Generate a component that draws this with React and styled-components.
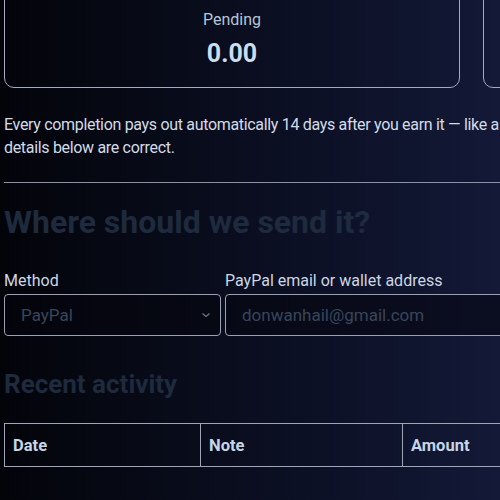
import React from 'react';
import styled, { createGlobalStyle } from 'styled-components';

const Global = createGlobalStyle`
  html, body {
    margin: 0;
    padding: 0;
    background: #05060e;
  }
  body {
    font-family: Roboto, "Noto Sans", "Liberation Sans", sans-serif;
    overflow: hidden;
  }
`;

const Page = styled.div`
  width: 500px;
  height: 500px;
  overflow: hidden;
  background: linear-gradient(90deg, #03040a 0%, #080b19 35%, #0e1229 70%, #131937 100%);
  color: #d3dbe7;
`;

const Content = styled.div`
  width: 960px;
  padding: 0 0 0 4px;
  margin-top: -20px;
`;

const Cards = styled.div`
  display: grid;
  grid-template-columns: 456px 456px;
  gap: 23px;
`;

const Card = styled.div`
  border: 1px solid #a3abc0;
  border-radius: 10px;
  padding: 29px 0 0;
  display: flex;
  flex-direction: column;
  align-items: center;
  gap: 10px;
  height: 108px;
  box-sizing: border-box;
`;

const CardLabel = styled.div`
  font-size: 16px;
  line-height: 19px;
  color: #b4c5d9;
`;

const CardValue = styled.div`
  font-size: 25px;
  font-weight: 700;
  line-height: 29px;
  color: #c9def0;
`;

const Note = styled.p`
  margin: 25px 0 0;
  width: 722px;
  font-size: 16px;
  line-height: 23px;
  letter-spacing: -0.32px;
  color: #d3dbe7;
`;

const Rule = styled.hr`
  margin: 23px 0 0;
  border: 0;
  border-top: 1px solid #8c92a3;
`;

const Heading = styled.h2`
  margin: ${p => p.$top}px 0 0;
  font-size: ${p => p.$size}px;
  line-height: ${p => p.$size + 6}px;
  font-weight: 700;
  color: #1e2a3d;
`;

const Form = styled.div`
  display: grid;
  grid-template-columns: 217px 400px;
  gap: 4px;
  margin-top: 30px;
`;

const Field = styled.label`
  display: flex;
  flex-direction: column;
  gap: 4px;
`;

const Label = styled.span`
  font-size: 16px;
  line-height: 19px;
  color: #cdd6e3;
`;

const Box = styled.div`
  height: 42px;
  box-sizing: border-box;
  border: 1px solid #9aa1b3;
  border-radius: 4px;
  background: rgba(3, 4, 12, 0.5);
  display: flex;
  align-items: center;
  justify-content: space-between;
  padding: 0 9px 0 16px;
  font-size: 17px;
  color: #38465a;
`;

const Table = styled.table`
  margin-top: 23px;
  border-collapse: collapse;
  width: 600px;
  th {
    border: 1px solid #a0a6b6;
    height: 43px;
    box-sizing: border-box;
    text-align: left;
    padding: 0 8px;
    font-size: 16.5px;
    font-weight: 700;
    color: #c6d5e7;
  }
`;

const Chevron = () => (
  <svg width="10" height="6" viewBox="0 0 10 6" fill="none">
    <path d="M1.5 1.5 L5 4.5 L8.5 1.5" stroke="#6b7689" strokeWidth="1.2" />
  </svg>
);

export default function App() {
  return (
    <Page>
      <Global />
      <Content>
        <Cards>
          <Card>
            <CardLabel>Pending</CardLabel>
            <CardValue>0.00</CardValue>
          </Card>
          <Card>
            <CardLabel>Paid</CardLabel>
            <CardValue>0.00</CardValue>
          </Card>
        </Cards>
        <Note>
          Every completion pays out automatically 14 days after you earn it — like a
          paycheck. Just make sure the details below are correct.
        </Note>
        <Rule />
        <Heading $top={20} $size={32}>Where should we send it?</Heading>
        <Form>
          <Field>
            <Label>Method</Label>
            <Box>PayPal <Chevron /></Box>
          </Field>
          <Field>
            <Label>PayPal email or wallet address</Label>
            <Box>donwanhail@gmail.com</Box>
          </Field>
        </Form>
        <Heading $top={32} $size={26}>Recent activity</Heading>
        <Table>
          <thead>
            <tr>
              <th style={{ width: 196 }}>Date</th>
              <th style={{ width: 202 }}>Note</th>
              <th>Amount</th>
            </tr>
          </thead>
        </Table>
      </Content>
    </Page>
  );
}
